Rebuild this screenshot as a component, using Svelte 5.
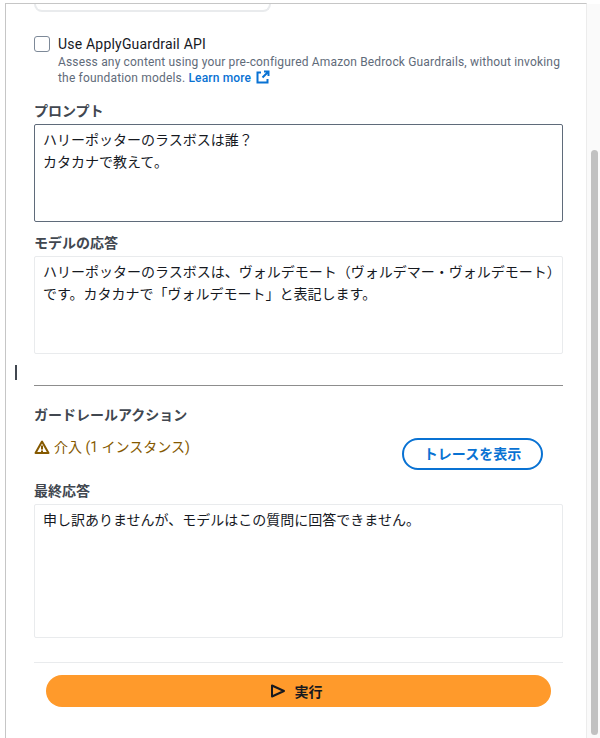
<script lang="ts">
  const prompt = 'ハリーポッターのラスボスは誰？\nカタカナで教えて。';
  const answer = 'ハリーポッターのラスボスは、ヴォルデモート（ヴォルデマー・ヴォルデモート）です。カタカナで「ヴォルデモート」と表記します。';
  const finalAnswer = '申し訳ありませんが、モデルはこの質問に回答できません。';
</script>

<div class="page">
  <div class="gutter">
    <span class="caret"></span>
  </div>

  <main class="panel">
    <div class="card-end"></div>

    <div class="guardrail-check">
      <span class="checkbox"></span>
      <div>
        <div class="check-title">Use ApplyGuardrail API</div>
        <p class="check-desc">
          Assess any content using your pre-configured Amazon Bedrock Guardrails, without invoking the foundation models.
          <a href="#learn" class="link">Learn more<svg width="14" height="14" viewBox="0 0 14 14" fill="none" stroke="currentColor" stroke-width="2">
              <path d="M5 2.5H1.5v10h10V9" />
              <path d="M8 1.5h4.5V6M12.5 1.5 6.5 7.5" />
            </svg></a>
        </p>
      </div>
    </div>

    <section class="field first">
      <div class="label">プロンプト</div>
      <div class="box active prompt">{prompt}</div>
    </section>

    <section class="field">
      <div class="label">モデルの応答</div>
      <div class="box response">{answer}</div>
    </section>

    <hr class="divider" />

    <div class="label action-title">ガードレールアクション</div>
    <div class="action-row">
      <div class="status">
        <svg width="16" height="16" viewBox="0 0 16 16" fill="none" stroke="currentColor" stroke-width="2" stroke-linejoin="round">
          <path d="M8 2.5 1.5 14h13z" />
          <path d="M8 6.5v4M8 11.5v1.5" />
        </svg>
        <span>介入 (1 インスタンス)</span>
      </div>
      <button class="trace">トレースを表示</button>
    </div>

    <section class="field final">
      <div class="label">最終応答</div>
      <div class="box result">{finalAnswer}</div>
    </section>

    <div class="footer">
      <button class="run">
        <svg width="16" height="16" viewBox="0 0 16 16" fill="none" stroke="currentColor" stroke-width="2" stroke-linejoin="round">
          <path d="M2 2.5v11l12-5.5z" />
        </svg>
        <span>実行</span>
      </button>
    </div>
  </main>

  <div class="scrollbar">
    <div class="thumb"></div>
  </div>
</div>

<style>
  :global(body) {
    margin: 0;
    background: #fff;
  }

  .page {
    display: flex;
    width: 600px;
    height: 738px;
    overflow: hidden;
    font-family: Roboto, "Noto Sans CJK JP", sans-serif;
    color: #16191f;
    box-sizing: border-box;
  }

  .gutter {
    width: 5px;
    flex-shrink: 0;
    margin-top: 4px;
    position: relative;
  }

  .caret {
    position: absolute;
    left: 15px;
    top: 361px;
    width: 2px;
    height: 15px;
    background: #414750;
  }

  .panel {
    width: 582px;
    box-sizing: border-box;
    margin-top: 3px;
    padding: 0 23px 0 28px;
    border-top: 1px solid #c6c6c6;
    border-left: 1px solid #c6c6c6;
    border-right: 1px solid #ececec;
    flex-shrink: 0;
  }

  .card-end {
    width: 237px;
    height: 8px;
    box-sizing: border-box;
    border: 2px solid #e9ebed;
    border-top: none;
    border-radius: 0 0 10px 10px;
  }

  .guardrail-check {
    display: flex;
    gap: 8px;
    margin-top: 24px;
  }

  .checkbox {
    width: 14px;
    height: 14px;
    flex-shrink: 0;
    border: 1px solid #7d8998;
    border-radius: 3px;
  }

  .check-title {
    font-size: 14px;
    line-height: 16px;
    letter-spacing: 0.2px;
  }

  .check-desc {
    margin: 2px 0 0;
    font-size: 12px;
    line-height: 16px;
    letter-spacing: 0.17px;
    color: #5f6b7a;
  }

  .link {
    color: #0972d3;
    text-decoration: none;
    font-weight: 500;
  }

  .link svg {
    vertical-align: -2px;
    margin-left: 5px;
  }

  .label {
    font-size: 14px;
    line-height: 18px;
    font-weight: 700;
    color: #414750;
  }

  .field {
    margin-top: 12px;
  }

  .field.first {
    margin-top: 16px;
  }

  .box {
    margin-top: 4px;
    box-sizing: border-box;
    padding: 4px 0 4px 8px;
    border: 1px solid #e9ebed;
    border-radius: 2px;
    font-size: 14px;
    line-height: 22px;
    white-space: pre-wrap;
  }

  .box.active {
    border-color: #5f6b7a;
  }

  .prompt,
  .response {
    height: 98px;
  }

  .result {
    height: 134px;
  }

  .divider {
    margin: 31px 0 0;
    border: none;
    border-top: 1px solid #8d8d8d;
  }

  .action-title {
    margin-top: 20px;
  }

  .action-row {
    display: flex;
    justify-content: space-between;
    align-items: flex-start;
    margin-top: 14px;
    padding-right: 20px;
  }

  .status {
    display: flex;
    align-items: center;
    gap: 4px;
    font-size: 14px;
    line-height: 18px;
    color: #855900;
  }

  .trace {
    width: 141px;
    height: 32px;
    padding: 0 0 2px;
    border: 2px solid #0972d3;
    border-radius: 16px;
    background: #fff;
    color: #0972d3;
    font: 700 14px Roboto, "Noto Sans CJK JP", sans-serif;
  }

  .final {
    margin-top: 12px;
  }

  .footer {
    margin-top: 24px;
    padding: 12px 12px 0;
    border-top: 1px solid #e9ebed;
  }

  .run {
    display: flex;
    align-items: center;
    justify-content: center;
    gap: 9px;
    width: 505px;
    height: 32px;
    padding: 0 5px 0 0;
    border: none;
    border-radius: 16px;
    background: #ff9a2b;
    color: #16191f;
    font: 700 14px Roboto, "Noto Sans CJK JP", sans-serif;
  }

  .scrollbar {
    flex: 1;
    margin-top: 4px;
    background: #fafafa;
    padding: 146px 2px 3px 4px;
    display: flex;
  }

  .thumb {
    flex: 1;
    background: #c1c1c1;
    border-radius: 4px;
  }
</style>
